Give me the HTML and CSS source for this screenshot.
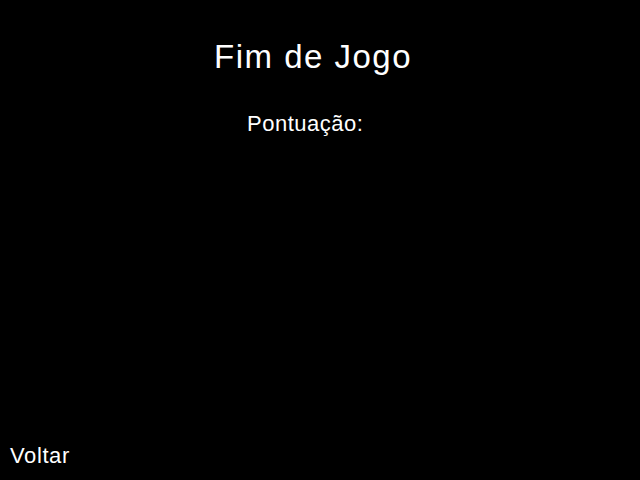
FILE: index.html
```html
<!DOCTYPE html>
<html lang="pt">
<head>
<meta charset="utf-8">
<title>Fim de Jogo</title>
<link rel="stylesheet" href="styles.css">
</head>
<body>
<main class="screen">
  <h1 class="title">Fim de Jogo</h1>
  <p class="score">Pontuação:</p>
  <a class="back" href="#">Voltar</a>
</main>
</body>
</html>
```
FILE: styles.css
```css
html, body {
  margin: 0;
  padding: 0;
  background: #000;
}
.screen {
  width: 640px;
  height: 480px;
  display: flex;
  flex-direction: column;
  box-sizing: border-box;
  padding: 40px 0 13px 0;
  font-family: "Liberation Sans", Arial, sans-serif;
  color: #fff;
}
.title {
  margin: 0 0 0 214px;
  font-size: 33px;
  font-weight: normal;
  line-height: 33px;
  letter-spacing: 1.5px;
}
.score {
  margin: 40px 0 0 247px;
  font-size: 22px;
  line-height: 22px;
  letter-spacing: 0.5px;
}
.back {
  margin: auto 0 0 10px;
  font-size: 22px;
  line-height: 22px;
  letter-spacing: 0.6px;
  color: #fff;
  text-decoration: none;
}
```
